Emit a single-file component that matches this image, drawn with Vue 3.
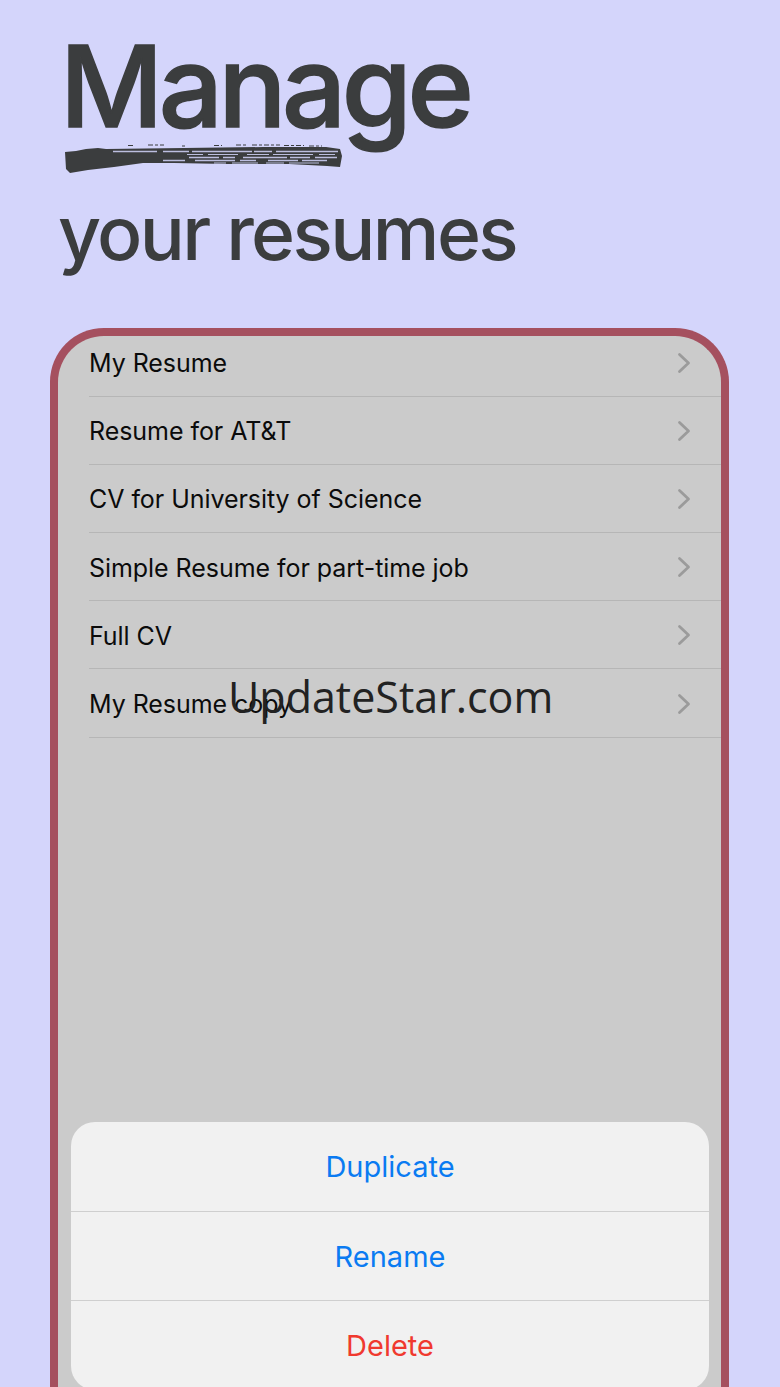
<template>
  <div class="page">
    <header class="hero">
      <h1 class="title">Manage</h1>
      <!-- brush stroke under the title -->
      <svg class="brush" width="280" height="30" viewBox="0 0 280 30" fill="none">
        <path d="M1 8 L12 7 L22 5 L34 4 L42 5 L120 4 L200 3 L262 3 L276 5 L278 12 L276 23 L263 22 L225 20 L163 20 L110 19 L79 19 L50 23 L24 26 L6 29 L2 25 Z" fill="#3b3d3e" />
        <g stroke="#d4d5fb" stroke-linecap="butt" stroke-opacity="0.85">
          <path d="M49 7.5 H274" stroke-width="1.5" stroke-dasharray="44 6 26 3 60 2 18 4 70 3" />
          <path d="M123 10.5 H272" stroke-width="1.1" stroke-dasharray="16 5 30 9 22 4 40 6" />
          <path d="M125 13.5 H273" stroke-width="1.4" stroke-dasharray="30 4 12 8 44 3 20 5 30 2" />
          <path d="M99 16.5 H263" stroke-width="1.6" stroke-dasharray="22 10 40 5 16 12 30 4 34 6" />
          <path d="M150 19 H262" stroke-width="1.1" stroke-dasharray="12 6 26 8 18 5 30" />
        </g>
        <path d="M64 1.5 H70 M84 1 H100 M118 2 H121 M150 1.5 H158 M172 1 H182 M188 1 H216 M220 1.5 H240 M245 2 H258" stroke="#3b3d3e" stroke-width="1" stroke-dasharray="5 2 3 2" />
      </svg>
      <h2 class="subtitle">your resumes</h2>
    </header>

    <section class="phone">
      <ul class="list">
        <li v-for="item in resumes" :key="item" class="row">
          <span class="row-label">{{ item }}</span>
          <svg class="chevron" width="14" height="22" viewBox="0 0 14 22" fill="none">
            <path d="M2.5 2.5 L11.5 11 L2.5 19.5" stroke="#9b9b9b" stroke-width="2.8" stroke-linecap="round" stroke-linejoin="round" />
          </svg>
        </li>
      </ul>

      <div class="sheet">
        <button v-for="action in actions" :key="action.label" class="sheet-btn" :class="{ danger: action.danger }">
          {{ action.label }}
        </button>
      </div>
    </section>

    <div class="watermark">UpdateStar.com</div>
  </div>
</template>

<script setup>
const resumes = [
  'My Resume',
  'Resume for AT&T',
  'CV for University of Science',
  'Simple Resume for part-time job',
  'Full CV',
  'My Resume copy',
];

const actions = [
  { label: 'Duplicate' },
  { label: 'Rename' },
  { label: 'Delete', danger: true },
];
</script>

<style scoped>
.page {
  position: relative;
  width: 780px;
  height: 1387px;
  overflow: hidden;
  background: #d4d5fb;
  font-family: Inter, "Liberation Sans", sans-serif;
  display: flex;
  flex-direction: column;
}

.hero {
  height: 328px;
  padding: 24px 0 0 60px;
  box-sizing: border-box;
  color: #3b3d3e;
}

.title {
  margin: 0;
  font-size: 113px;
  line-height: 124px;
  font-weight: 500;
  letter-spacing: -4.4px;
  -webkit-text-stroke: 1.6px #3b3d3e;
}

.brush {
  display: block;
  margin: -4px 0 0 4px;
  filter: blur(0.3px);
}

.subtitle {
  margin: 17px 0 0 -2px;
  font-size: 75px;
  line-height: 84px;
  font-weight: 500;
  letter-spacing: -2.6px;
}

.phone {
  margin-left: 50px;
  width: 679px;
  flex: 1;
  box-sizing: border-box;
  border: 8px solid #a5505f;
  border-bottom: none;
  border-radius: 54px 54px 0 0;
  background: #cbcbcb;
  display: flex;
  flex-direction: column;
  justify-content: space-between;
  overflow: hidden;
}

.list {
  list-style: none;
  margin: -7.5px 0 0;
  padding: 0 0 0 31px;
}

.row {
  height: 68.2px;
  box-sizing: border-box;
  border-bottom: 1px solid #b6b6b6;
  display: flex;
  align-items: center;
  justify-content: space-between;
  padding-right: 30px;
  font-size: 25px;
  letter-spacing: -0.05px;
  color: #0b0b0b;
}

.row-label {
  padding-top: 2px;
}

.chevron {
  margin-top: 1px;
}

.sheet {
  margin: 0 12px -3px 13px;
  height: 268px;
  background: #f1f1f1;
  border-radius: 24px;
  display: flex;
  flex-direction: column;
  overflow: hidden;
}

.sheet-btn {
  flex: 1;
  border: none;
  background: none;
  border-bottom: 1px solid #cfcfcf;
  font-family: inherit;
  font-size: 29px;
  color: #0a7bf2;
  padding: 0;
}

.sheet-btn:last-child {
  border-bottom: none;
}

.sheet-btn.danger {
  color: #f0392f;
}

/* site stamp lying over the list */
.watermark {
  position: absolute;
  left: 228px;
  top: 668px;
  font-family: "Open Sans", sans-serif;
  font-size: 43px;
  line-height: 58px;
  color: #222;
  white-space: nowrap;
}
</style>
